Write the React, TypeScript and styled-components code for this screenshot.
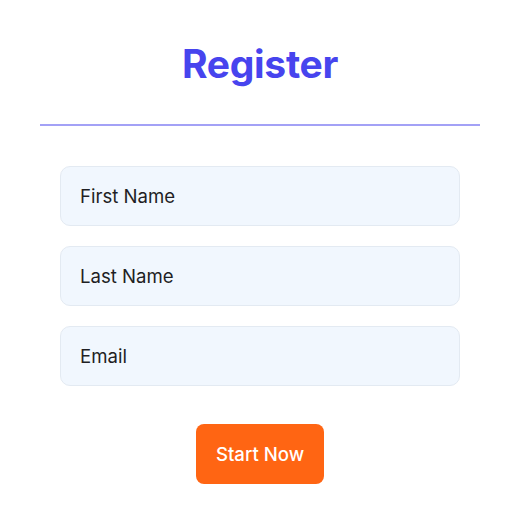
import { styled, createGlobalStyle } from "styled-components";

const GlobalStyle = createGlobalStyle`
  body {
    margin: 0;
    background: #ffffff;
    font-family: Inter, "Noto Sans", sans-serif;
  }
`;

const Page = styled.div`
  padding: 0 40px;
`;

const Title = styled.h1`
  margin: 0;
  padding-top: 40px;
  height: 124px;
  box-sizing: border-box;
  text-align: center;
  font-size: 39px;
  font-weight: 700;
  letter-spacing: -0.3px;
  color: #4744ee;
`;

const Divider = styled.hr`
  margin: 0;
  border: none;
  border-top: 2px solid #a3a1f6;
`;

const Form = styled.form`
  display: flex;
  flex-direction: column;
  align-items: center;
  gap: 20px;
  padding: 40px 20px 0;
`;

const Field = styled.input`
  box-sizing: border-box;
  width: 100%;
  height: 60px;
  padding: 0 19px;
  border: 1px solid #e3eaf2;
  border-radius: 10px;
  background: #f1f7fe;
  font-family: Inter, sans-serif;
  font-size: 18.6px;
  color: #1f1f24;
  outline: none;

  &::placeholder {
    color: #1f1f24;
  }
`;

const Submit = styled.button`
  margin-top: 18px;
  height: 60px;
  padding: 0 20px;
  border: none;
  border-radius: 8px;
  background: #ff6513;
  color: #ffffff;
  font-family: Inter, sans-serif;
  font-size: 18.6px;
  font-weight: 500;
  cursor: pointer;
`;

const App = () => {
  return (
    <>
      <GlobalStyle />
      <Page>
        <Title>Register</Title>
        <Divider />
        <Form onSubmit={(e) => e.preventDefault()}>
          <Field placeholder="First Name" />
          <Field placeholder="Last Name" />
          <Field placeholder="Email" />
          <Submit type="submit">Start Now</Submit>
        </Form>
      </Page>
    </>
  );
};

export default App;
